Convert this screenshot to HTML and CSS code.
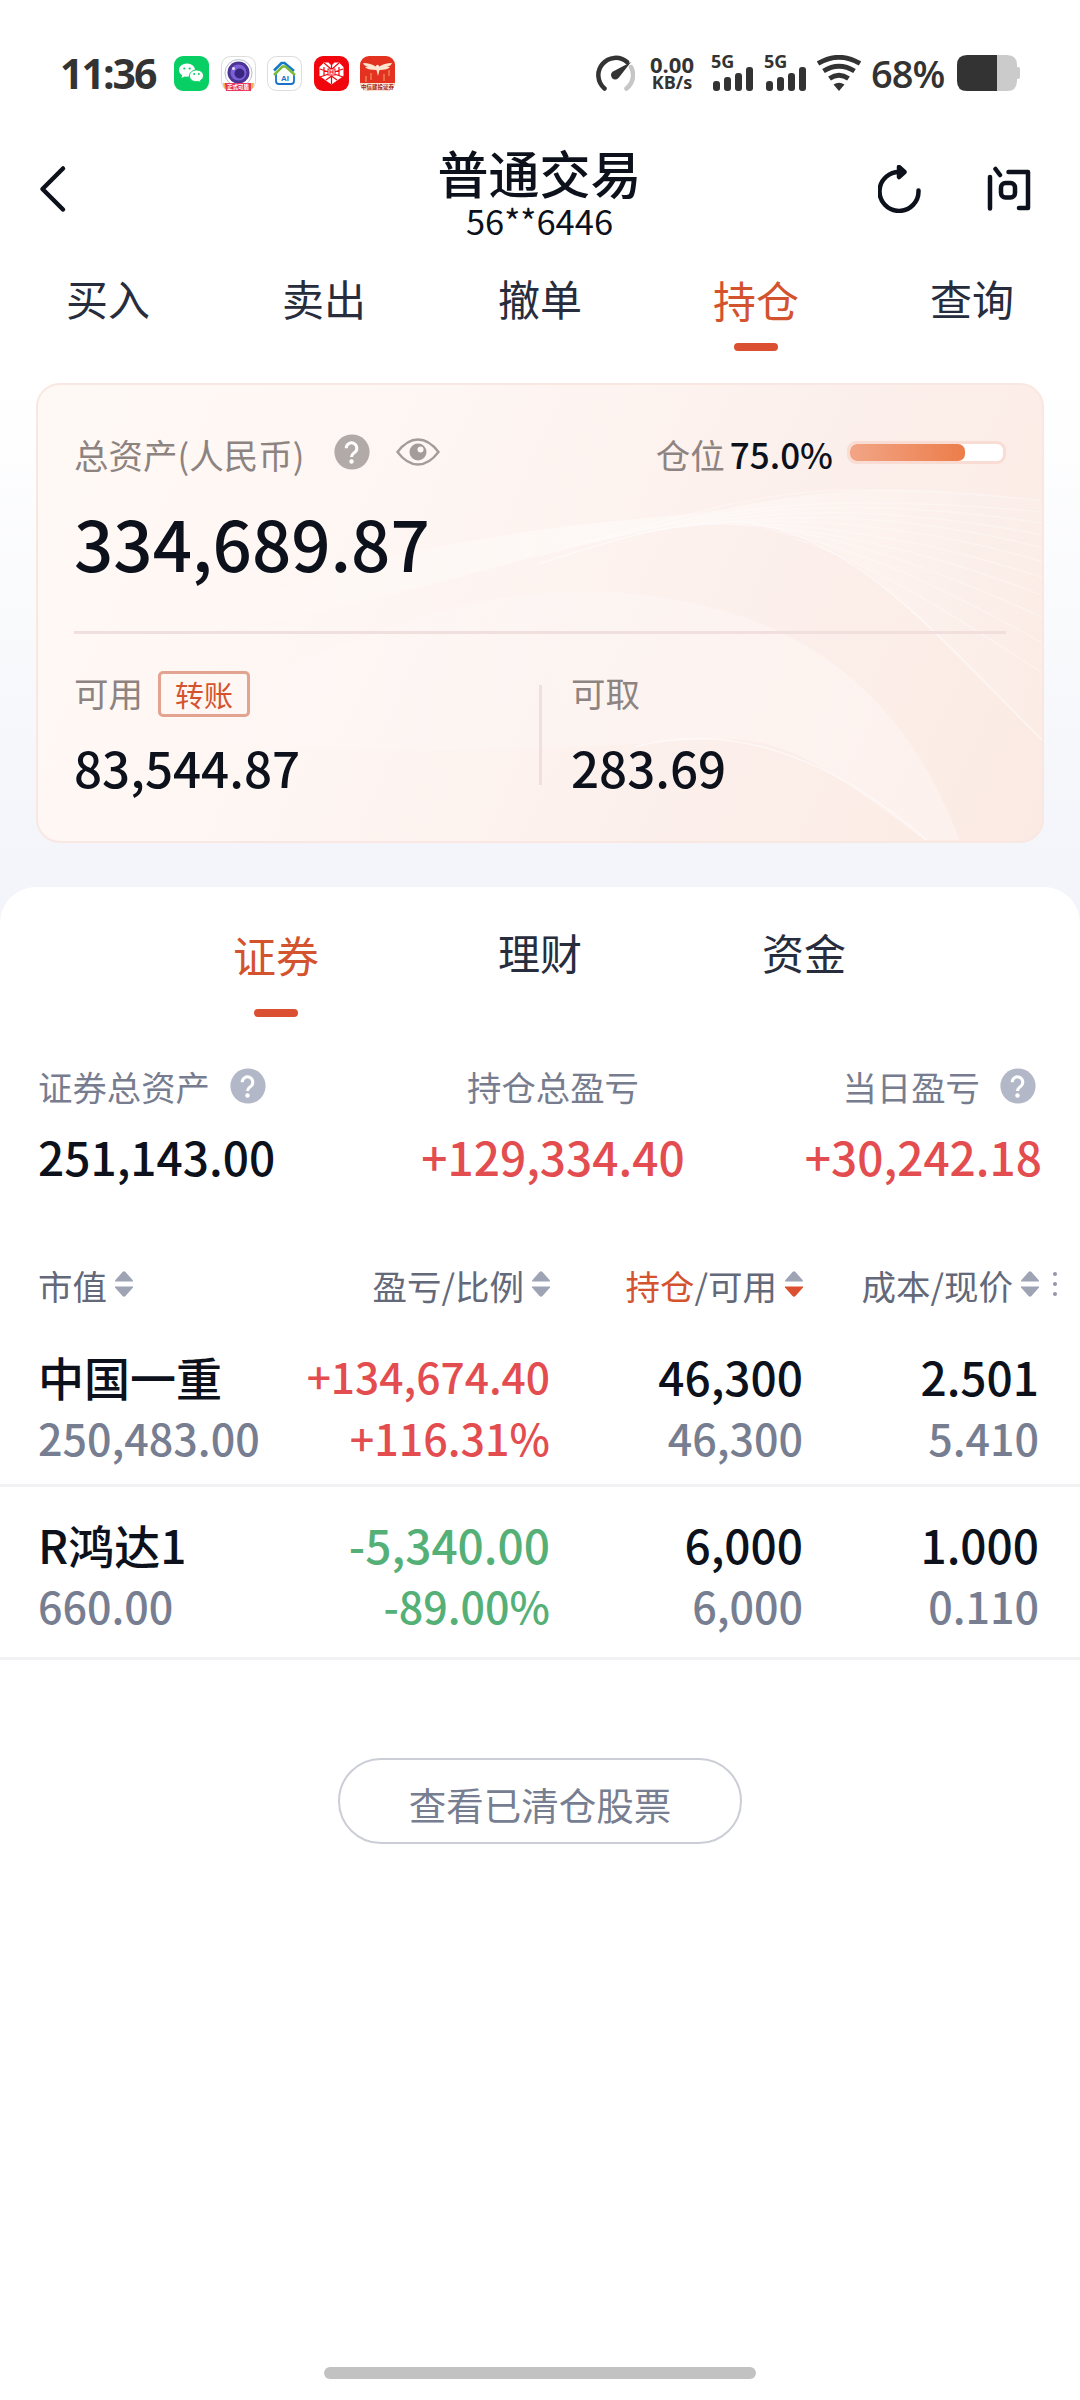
FILE: index.html
```html
<!DOCTYPE html>
<html lang="zh-CN">
<head>
  <meta charset="UTF-8">
  <meta name="viewport" content="width=device-width, initial-scale=1.0">
  <title>普通交易</title>
  <link rel="stylesheet" href="styles.css">
</head>
<body>
  <!-- 图标 -->
  <svg class="sprite" width="0" height="0">
    <symbol id="help" viewBox="0 0 36 36">
      <circle cx="18" cy="18" r="17.6" fill="currentColor"/>
      <path d="M12.2 14.200a5.300 5.300 0 1 1 8.600 4.100c-2 1.600-3.300 2.200-3.300 4.700" fill="none" stroke="#fff" stroke-width="3"/>
      <circle cx="17.500" cy="27.500" r="2.200" fill="#fff"/>
    </symbol>
    <symbol id="sort" viewBox="0 0 18 26">
      <path class="up" d="M7.500 1q1.500-1.500 3 0L18 9.500v1H0v-1z"/>
      <path class="down" d="M0 15.500h18v1L10.500 25q-1.500 1.500-3 0L0 16.500z"/>
    </symbol>
    <symbol id="signal" viewBox="0 0 40 25">
      <rect x="0" y="15" width="7" height="10" rx="3"/>
      <rect x="11" y="11" width="7" height="14" rx="3"/>
      <rect x="22" y="7" width="7" height="18" rx="3"/>
      <rect x="33" y="1" width="7" height="24" rx="3"/>
    </symbol>
  </svg>

  <div class="top">
    <div class="status-bar">
      <span class="clock">11:36</span>
      <div class="apps">
        <svg viewBox="0 0 35 35">
          <rect width="35" height="35" rx="9" fill="#07cf63"/>
          <path d="M13 7.500c-4.800 0-8 3-8 6.500 0 2.200 1.200 4 3.200 5.200L7.500 22l3-1.600c4.500 1 10.500-1.200 10.500-6.400 0-3.500-3.200-6.500-8-6.500z" fill="#fff"/>
          <path d="M22.500 14c-4 0-7 2.600-7 5.900 0 4.500 5 6.600 9 5.500l2.500 1.300-.5-2.400c1.900-1.100 3-2.600 3-4.400 0-3.300-3-5.900-7-5.900z" fill="#fff" stroke="#07cf63"/>
          <g fill="#07cf63"><circle cx="10.300" cy="12.500" r="1.100"/><circle cx="15.700" cy="12.500" r="1.100"/><circle cx="20.200" cy="18" r="1"/><circle cx="24.800" cy="18" r="1"/></g>
        </svg>
        <svg viewBox="0 0 35 35">
          <rect x=".5" y=".5" width="34" height="34" rx="9" fill="#fff" stroke="#dcdcdc"/>
          <circle cx="17.500" cy="17" r="13.500" fill="none" stroke="#b9bdd0"/>
          <circle cx="17.500" cy="16.500" r="11" fill="#4b3494"/>
          <circle cx="17.500" cy="16.500" r="8" fill="#7d5fd6"/>
          <circle cx="18.500" cy="17.500" r="5" fill="#3a2680"/>
          <circle cx="12.500" cy="12.500" r="1.500" fill="#eae4ff"/>
          <path d="M2 27h31q0 8-8 8H10q-8 0-8-8z" fill="#f2b04a"/>
          <path d="M4 27h26v8H5z" fill="#e8365d"/>
          <text x="17" y="33.300" text-anchor="middle" class="app-name" fill="#fff">正式可盾</text>
        </svg>
        <svg viewBox="0 0 35 35">
          <rect x=".5" y=".5" width="34" height="34" rx="9" fill="#fff" stroke="#dcdcdc"/>
          <path d="M9 18v7q0 3 3 3h12q3 0 3-3v-7" fill="none" stroke="#1a72c8" stroke-width="1.800"/>
          <path d="M7 14.500L14.500 7h3l9.500 8" fill="none" stroke="#1678c8" stroke-width="2.500"/>
          <path d="M7 19l8.500-8.500h3L28 19" fill="none" stroke="#7cba3c" stroke-width="2.500"/>
          <text x="18" y="25" text-anchor="middle" class="ai" fill="#1a72c8">AI</text>
        </svg>
        <svg viewBox="0 0 35 35">
          <rect width="35" height="35" rx="9" fill="#f2060e"/>
          <path d="M17.500 28.500L5.500 20V11l4.500-4.500h4.500l3 3 3-3H25l4.500 4.500v9z" fill="#fff"/>
          <path d="M6 13l23 8M29 13L6 21M10 7l7.500 6.500L25 7M17.500 9v4M12 24l5.500-4 5.500 4M17.500 20v8M10 11v9M25 11v9" fill="none" stroke="#f2060e" stroke-width="1.200"/>
          <rect x="14" y="13" width="7" height="6" fill="#fff" stroke="#f2060e"/>
          <path d="M16 14v4M19 14v4M16 16h3" stroke="#f2060e"/>
        </svg>
        <svg viewBox="0 0 35 35">
          <rect width="35" height="35" rx="9" fill="#e3321f"/>
          <path d="M0 27h35q-1 8-9 8H9q-8 0-9-8z" fill="#fbe3d2"/>
          <path d="M3 7q8 0 12.500 3.500Q17.500 7 19.500 10.500 24 7 32 7q-1 3-5 3.500 2 0 3 .5-2 3-10.500 3l-1.500 6-1.500-6Q7 14 5 11q1-.5 3-.5Q4 10 3 7z" fill="#fde6cf"/>
          <path d="M6 20v6M11 17v7M24 18v7M29 14v6" stroke="#ec6a48" stroke-width="2"/>
          <text x="17.500" y="33" text-anchor="middle" class="app-name" fill="#a3251c">中信建投证券</text>
        </svg>
      </div>
      <div class="indicators">
        <svg class="gauge" viewBox="0 0 39 36">
          <path d="M8.500 33.500A17 17 0 1 1 31 7" fill="none" stroke="#333" stroke-width="4.500" stroke-linecap="round"/>
          <path d="M35 12A17 17 0 0 1 30.500 33.500" fill="none" stroke="#c6c6c6" stroke-width="4.500" stroke-linecap="round"/>
          <path d="M35 7L22.500 23q-3.500 3-6.500 0-2.500-4 1-6.500z" fill="#333"/>
        </svg>
        <div class="speed"><span>0.00</span><small>KB/s</small></div>
        <div class="sim"><span>5G</span><svg><use href="#signal"/></svg></div>
        <div class="sim"><span>5G</span><svg><use href="#signal"/></svg></div>
        <svg class="wifi" viewBox="0 0 44 36">
          <g fill="none" stroke="#333" stroke-width="4.800">
            <path d="M1 8.500Q22-4 43 8.500"/>
            <path d="M6.500 16Q22 6.500 37.500 16"/>
            <path d="M12.500 23.500Q22 17 31.500 23.500"/>
          </g>
          <path d="M16.500 29.500q5.500-3.500 11 0L22 36z" fill="#333"/>
        </svg>
        <span class="percent">68%</span>
        <svg class="battery" viewBox="0 0 63 36">
          <path d="M40 0h10q10 0 10 10v2h1q2 0 2 2v8q0 2-2 2h-1v2q0 10-10 10H40z" fill="#cbcbcb"/>
          <path d="M40 0H10Q0 0 0 10v16q0 10 10 10h30z" fill="#333"/>
        </svg>
      </div>
    </div>

    <header>
      <svg class="back" viewBox="0 0 28 48"><path d="M24 3.500L3.500 24 24 44.500"/></svg>
      <div class="title">
        <h1>普通交易</h1>
        <p>56**6446</p>
      </div>
      <div class="actions">
        <svg class="refresh" viewBox="0 0 46 48">
          <path d="M40.500 25.500A19.500 19.500 0 1 1 23 7"/>
          <path class="arrow" d="M21 2l5.500 5-5.500 5z"/>
        </svg>
        <svg class="ask" viewBox="0 0 46 48">
          <path d="M4 12v31.500M9.500 4l4.500 6M22.500 7h19.500v36h-9"/>
          <rect x="15" y="18" width="14" height="14.500" rx="4.500"/>
        </svg>
      </div>
    </header>

    <nav class="tabs">
      <a>买入</a>
      <a>卖出</a>
      <a>撤单</a>
      <a class="active">持仓</a>
      <a>查询</a>
    </nav>

    <section class="card">
      <svg class="waves" viewBox="0 0 1008 460" preserveAspectRatio="none">
        <defs>
          <linearGradient id="fade" x1="0" x2="1"><stop offset="0" stop-color="#fffdfa" stop-opacity="0"/><stop offset=".5" stop-color="#fffdfa" stop-opacity=".6"/><stop offset="1" stop-color="#fff" stop-opacity=".05"/></linearGradient>
          <linearGradient id="fade2" x1="0" x2="1"><stop offset="0" stop-color="#fff" stop-opacity="0"/><stop offset=".8" stop-color="#fff" stop-opacity=".3"/><stop offset="1" stop-color="#fff" stop-opacity=".3"/></linearGradient>
        </defs>
        <path d="M100 260C400 220 560 138 690 138S880 240 1008 358V115C860 95 760 110 690 125S400 130 100 260z" fill="url(#fade)"/>
        <path d="M90 360C350 230 450 208 560 208 760 215 870 310 925 459H890C810 400 760 357 690 357S480 380 90 360z" fill="url(#fade2)"/>
        <g class="lines">
          <path class="edge" d="M504 180C600 148 650 138 695 138 810 138 910 260 1008 358"/>
          <path d="M504 172C620 140 720 105 820 106 890 106 950 110 1008 117"/>
          <path d="M520 168C660 130 760 104 1008 128"/>
          <path d="M540 163C680 127 800 108 1008 139"/>
          <path d="M560 158C700 127 820 115 1008 151"/>
          <path d="M600 150C720 130 840 122 1008 164"/>
          <path d="M620 146C730 130 860 135 1008 178"/>
          <path d="M640 142C740 134 870 148 1008 194"/>
          <path d="M670 140C770 140 890 165 1008 212"/>
          <path d="M700 140C800 148 900 185 1008 234"/>
          <path d="M730 145C830 165 920 210 1008 260"/>
          <path d="M760 155C850 185 930 240 1008 290"/>
          <path class="edge" d="M600 365C690 340 790 370 892 459"/>
        </g>
      </svg>
      <div class="card-head">
        <span class="label">总资产(人民币)</span>
        <svg class="help"><use href="#help"/></svg>
        <svg class="eye" viewBox="0 0 44 28">
          <path d="M1.500 14Q11 1.500 22 1.500T42.500 14Q33 26.500 22 26.500T1.500 14z" fill="none" stroke="#a49c9a" stroke-width="2.400"/>
          <circle cx="22" cy="14" r="8.500" fill="#a49c9a"/>
          <circle cx="24.500" cy="11.500" r="3" fill="#fff8f5"/>
        </svg>
        <div class="position">
          <span class="label">仓位</span>
          <b>75.0%</b>
          <div class="bar"><i style="width: 75%"></i></div>
        </div>
      </div>
      <div class="total">334,689.87</div>
      <div class="card-foot">
        <div class="cell">
          <div class="label">可用<a class="transfer">转账</a></div>
          <div class="amount">83,544.87</div>
        </div>
        <div class="cell">
          <div class="label">可取</div>
          <div class="amount">283.69</div>
        </div>
      </div>
    </section>
  </div>

  <main>
    <nav class="sub-tabs">
      <a class="active">证券</a>
      <a>理财</a>
      <a>资金</a>
    </nav>

    <section class="summary">
      <div>
        <p>证券总资产<svg class="help"><use href="#help"/></svg></p>
        <b>251,143.00</b>
      </div>
      <div class="center">
        <p>持仓总盈亏</p>
        <b class="red">+129,334.40</b>
      </div>
      <div class="right">
        <p>当日盈亏<svg class="help"><use href="#help"/></svg></p>
        <b class="red">+30,242.18</b>
      </div>
    </section>

    <section class="holdings">
      <div class="row head">
        <div>市值<svg class="sort"><use href="#sort"/></svg></div>
        <div>盈亏/比例<svg class="sort"><use href="#sort"/></svg></div>
        <div><em>持仓</em>/可用<svg class="sort desc"><use href="#sort"/></svg></div>
        <div>成本/现价<svg class="sort"><use href="#sort"/></svg></div>
        <svg class="more" viewBox="0 0 4 26"><circle cx="2" cy="3" r="2"/><circle cx="2" cy="13" r="2"/><circle cx="2" cy="23" r="2"/></svg>
      </div>
      <div class="row">
        <div><b>中国一重</b><span>250,483.00</span></div>
        <div class="red"><b class="long">+134,674.40</b><span>+116.31%</span></div>
        <div><b>46,300</b><span>46,300</span></div>
        <div><b>2.501</b><span>5.410</span></div>
      </div>
      <div class="row second">
        <div><b>R鸿达1</b><span>660.00</span></div>
        <div class="green"><b>-5,340.00</b><span>-89.00%</span></div>
        <div><b>6,000</b><span>6,000</span></div>
        <div><b>1.000</b><span>0.110</span></div>
      </div>
    </section>

    <a class="cleared">查看已清仓股票</a>
    <div class="home-bar"></div>
  </main>
</body>
</html>
```
FILE: styles.css
```css
* {
  box-sizing: border-box;
  margin: 0;
  padding: 0;
}

body {
  width: 1080px;
  height: 2400px;
  display: flex;
  flex-direction: column;
  font-family: "Noto Sans CJK SC", sans-serif;
  color: #0c111b;
  background: #f4f5fa;
  overflow: hidden;
}

b, h1 {
  font-weight: 500;
}

svg {
  display: block;
  flex: none;
}

.sprite {
  position: absolute;
}

.top {
  height: 887px;
  background: linear-gradient(#fff 380px, #f4f5fa 860px);
}

/* 状态栏 */
.status-bar {
  height: 146px;
  padding: 0 60px;
  display: flex;
  align-items: center;
  color: #333;
  font-family: "Open Sans", "Noto Sans", sans-serif;
  font-weight: 600;
}

.clock {
  width: 114px;
  font-size: 41px;
  font-weight: 700;
  letter-spacing: -2px;
}

.apps {
  display: flex;
  gap: 11.600px;
}

.apps svg {
  width: 35px;
  height: 35px;
}

.app-name {
  font: 700 5.500px "Noto Sans CJK SC", sans-serif;
}

.ai {
  font: 700 8px "Liberation Sans", sans-serif;
}

.indicators {
  display: flex;
  align-items: center;
  margin-left: auto;
}

.gauge {
  width: 39px;
  height: 36px;
}

.speed {
  width: 48px;
  margin: 0 15px 0 13px;
  display: flex;
  flex-direction: column;
  align-items: center;
  font-size: 22px;
  font-weight: 700;
  line-height: 18px;
}

.speed small {
  font-size: 18px;
}

.sim {
  width: 42px;
  height: 36px;
  margin-right: 11px;
  position: relative;
}

.sim span {
  display: block;
  font-size: 18px;
  font-weight: 700;
  line-height: 13px;
}

.sim svg {
  position: absolute;
  left: 2px;
  bottom: 0;
  width: 40px;
  height: 25px;
  fill: #333;
}

.wifi {
  width: 44px;
  height: 36px;
}

.percent {
  width: 76px;
  margin: 0 10px;
  font-size: 38px;
  letter-spacing: -1px;
}

.battery {
  width: 63px;
  height: 36px;
}

/* 标题 */
header {
  height: 99px;
  padding: 0 48px 0 39px;
  display: grid;
  grid-template-columns: 1fr auto 1fr;
  align-items: center;
}

.back {
  width: 28px;
  height: 48px;
  margin-bottom: 13px;
  fill: none;
  stroke: #0c111b;
  stroke-width: 4.500;
  stroke-linecap: round;
  stroke-linejoin: round;
}

.title {
  text-align: center;
  padding-left: 8px;
}

h1 {
  font-size: 51px;
  line-height: 54px;
}

.title p {
  margin-top: -1px;
  font-size: 34.500px;
  line-height: 44px;
}

.title h1 {
  margin-top: -5px;
}

.actions {
  display: flex;
  justify-content: flex-end;
  gap: 62px;
  margin-bottom: 13px;
}

.actions svg {
  width: 46px;
  height: 48px;
  fill: none;
  stroke: #0c111b;
  stroke-width: 4.500;
  stroke-linecap: round;
  stroke-linejoin: round;
}

.actions .arrow {
  fill: #0c111b;
}

.tabs {
  height: 138px;
  display: flex;
}

.tabs a, .sub-tabs a {
  width: 216px;
  text-align: center;
  font-size: 42px;
  line-height: 60px;
  color: #272d3d;
}

.tabs a {
  padding-top: 23px;
}

.tabs .active, .sub-tabs .active {
  font-size: 43px;
  color: #d4532f;
}

.tabs .active {
  padding-top: 24px;
}

.active::after {
  content: "";
  display: block;
  width: 44px;
  height: 8px;
  margin: 14px auto 0;
  border-radius: 4px;
  background: #da5030;
}

/* 资产卡片 */
.card {
  position: relative;
  height: 460px;
  margin: 0 36px;
  padding: 0 36px;
  border: 2px solid #f9e7e1;
  border-radius: 24px;
  background: linear-gradient(115deg, #fff9f6 0%, #fef6f3 35%, #fcf0ec 65%, #fbeae3 100%);
  overflow: hidden;
}

.waves {
  position: absolute;
  left: 0;
  top: 0;
  width: 100%;
  height: 100%;
}

.lines path {
  fill: none;
  stroke: #fff;
  stroke-opacity: .3;
  stroke-width: 1.500;
}

.lines .edge {
  stroke-opacity: .5;
}

.card > div {
  position: relative;
}

.label {
  font-size: 34.500px;
  line-height: 50px;
  color: #8d8380;
}

.card-head {
  display: flex;
  align-items: center;
  padding-top: 44px;
}

.help {
  width: 36px;
  height: 36px;
  color: #b3b8c8;
}

.card .help {
  margin: -5px 26px 0 30px;
  color: #b2aaa8;
}

.eye {
  width: 44px;
  height: 28px;
  margin-top: -5px;
}

.position {
  display: flex;
  align-items: center;
  margin-left: auto;
}

.position b {
  margin: 0 14px 0 5px;
  font-size: 35px;
  line-height: 50px;
}

.bar {
  width: 159px;
  height: 23px;
  margin-top: -4px;
  border: 3px solid #f9dcd3;
  border-radius: 9px;
  background: #fff;
}

.bar i {
  display: block;
  height: 100%;
  border-radius: 7px;
  background: linear-gradient(90deg, #f2a586, #ec7d4a);
}

.total {
  height: 155px;
  padding-top: 13px;
  border-bottom: 3px solid #f0dfdc;
  font-size: 69px;
  font-weight: 500;
  line-height: 100px;
}

.card-foot {
  display: flex;
  padding-top: 33px;
}

.card-foot .cell {
  width: 465px;
}

.cell + .cell {
  position: relative;
  padding-left: 32px;
}

.cell + .cell::before {
  content: "";
  position: absolute;
  left: 0;
  top: 18px;
  width: 3px;
  height: 100px;
  background: #f0dfdc;
}

.cell .label {
  display: flex;
  height: 50px;
}

.transfer {
  width: 92px;
  height: 46px;
  margin: 4px 0 0 15px;
  border: 3px solid #e2a391;
  border-radius: 5px;
  font-size: 29px;
  line-height: 40px;
  text-align: center;
  color: #d4532f;
}

.amount {
  margin-top: 12px;
  font-size: 49.300px;
  font-weight: 500;
  line-height: 76px;
}

/* 持仓 */
main {
  flex: 1;
  display: flex;
  flex-direction: column;
  border-radius: 36px 36px 0 0;
  background: #fff;
}

.sub-tabs {
  display: flex;
  justify-content: center;
  height: 160px;
  padding-top: 35px;
}

.sub-tabs a {
  width: 264px;
}

.sub-tabs .active {
  padding-top: 2px;
}

.sub-tabs .active::after {
  margin-top: 25px;
}

.summary {
  display: grid;
  grid-template-columns: 1fr 1fr 1fr;
  padding: 14px 38px 0;
  height: 189px;
}

.summary > div {
  display: flex;
  flex-direction: column;
}

.summary p {
  display: flex;
  align-items: center;
  gap: 20px;
  height: 50px;
  font-size: 34.400px;
  color: #777d8f;
}

.summary b {
  margin-top: 13px;
  font-size: 46px;
  line-height: 64px;
}

.summary .center {
  align-items: center;
  padding-left: 26px;
}

.summary .right {
  align-items: flex-end;
}

.right p {
  padding-right: 6px;
}

.red, .summary .red {
  color: #e34d50;
}

.green {
  color: #55b078;
}

.row {
  display: grid;
  grid-template-columns: 250px 262px 253px 236px;
  height: 173px;
  padding: 0 38px;
  border-bottom: 3px solid #f2f2f4;
}

.row div {
  display: flex;
  flex-direction: column;
  align-items: flex-end;
}

.row div:first-child {
  align-items: flex-start;
}

.row b {
  margin-top: -2px;
  font-size: 46px;
  line-height: 62px;
}

.row .long {
  font-size: 42.500px;
}

.row span {
  margin-top: -1px;
  font-size: 43px;
  font-weight: 500;
  line-height: 62px;
  color: #777e91;
}

.row .red span, .row .green span {
  color: inherit;
}

.row.head {
  grid-template-columns: 250px 262px 253px 236px 4px;
  height: 111px;
  padding-top: 24px;
  border: 0;
  font-size: 34.500px;
  line-height: 50px;
  color: #636979;
}

.row.head div {
  flex-direction: row;
  justify-content: flex-end;
  align-items: flex-start;
}

.row.head div:first-child {
  justify-content: flex-start;
}

.row.head + .row {
  height: 140px;
}

.row.second {
  padding-top: 28px;
}

em {
  font-style: normal;
  color: #d4532f;
}

.sort {
  width: 18px;
  height: 26px;
  margin: 11px 0 0 8px;
  fill: #9ea4b4;
}

.sort.desc {
  --down: #da5030;
}

.down {
  fill: var(--down, #9ea4b4);
}

.more {
  width: 4px;
  height: 26px;
  margin: 11px 0 0 14px;
  fill: #9298a8;
}

.cleared {
  width: 404px;
  height: 86px;
  margin: 98px auto 0;
  border: 2px solid #cbced6;
  border-radius: 43px;
  text-align: center;
  font-size: 37.500px;
  line-height: 87px;
  color: #777e91;
}

.home-bar {
  width: 432px;
  height: 12px;
  margin: auto auto 21px;
  border-radius: 6px;
  background: #c2c2c2;
}
```
